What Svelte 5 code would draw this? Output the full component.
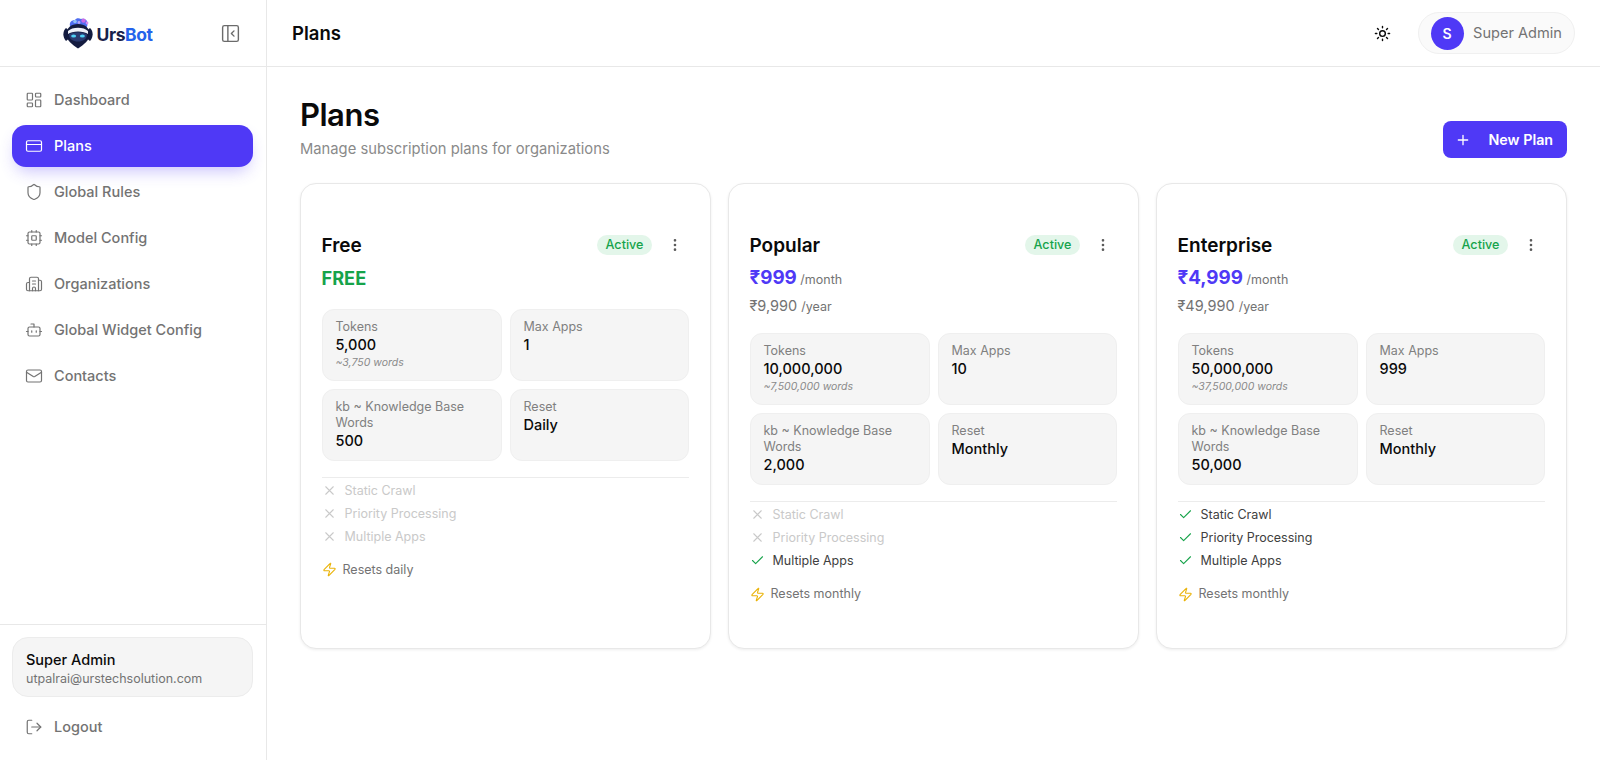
<script>
	const icons = {
		dashboard:
			'<rect width="7" height="9" x="3" y="3" rx="1"/><rect width="7" height="5" x="14" y="3" rx="1"/><rect width="7" height="9" x="14" y="12" rx="1"/><rect width="7" height="5" x="3" y="16" rx="1"/>',
		card: '<rect width="20" height="14" x="2" y="5" rx="2"/><line x1="2" x2="22" y1="10" y2="10"/>',
		shield:
			'<path d="M20 13c0 5-3.5 7.5-7.66 8.95a1 1 0 0 1-.67-.01C7.5 20.5 4 18 4 13V6a1 1 0 0 1 1-1c2 0 4.5-1.2 6.24-2.72a1.17 1.17 0 0 1 1.52 0C14.51 3.81 17 5 19 5a1 1 0 0 1 1 1z"/>',
		cpu: '<rect width="16" height="16" x="4" y="4" rx="2"/><rect width="6" height="6" x="9" y="9" rx="1"/><path d="M15 2v2M15 20v2M2 15h2M2 9h2M20 15h2M20 9h2M9 2v2M9 20v2"/>',
		building:
			'<path d="M10 12h4M10 8h4M14 21v-3a2 2 0 0 0-4 0v3"/><path d="M6 10H4a2 2 0 0 0-2 2v7a2 2 0 0 0 2 2h16a2 2 0 0 0 2-2V9a2 2 0 0 0-2-2h-2"/><path d="M6 21V5a2 2 0 0 1 2-2h8a2 2 0 0 1 2 2v16"/>',
		bot: '<path d="M12 8V4H8"/><rect width="16" height="12" x="4" y="8" rx="2"/><path d="M2 14h2M20 14h2M15 13v2M9 13v2"/>',
		mail: '<path d="m22 7-8.991 5.727a2 2 0 0 1-2.009 0L2 7"/><rect x="2" y="4" width="20" height="16" rx="2"/>',
		logout: '<path d="M9 21H5a2 2 0 0 1-2-2V5a2 2 0 0 1 2-2h4"/><path d="m16 17 5-5-5-5"/><path d="M21 12H9"/>',
		panel: '<rect width="18" height="18" x="3" y="3" rx="2"/><path d="M9 3v18"/><path d="m16 15-3-3 3-3"/>',
		sun: '<circle cx="12" cy="12" r="4"/><path d="M12 2v2M12 20v2M4.93 4.93l1.41 1.41M17.66 17.66l1.41 1.41M2 12h2M20 12h2M6.34 17.66l-1.41 1.41M19.07 4.93l-1.41 1.41"/>',
		plus: '<path d="M5 12h14M12 5v14"/>',
		dots: '<circle cx="12" cy="12" r="1"/><circle cx="12" cy="5" r="1"/><circle cx="12" cy="19" r="1"/>',
		x: '<path d="M18 6 6 18M6 6l12 12"/>',
		check: '<path d="M20 6 9 17l-5-5"/>',
		zap: '<path d="M4 14a1 1 0 0 1-.78-1.63l9.9-10.2a.5.5 0 0 1 .86.46l-1.92 6.02A1 1 0 0 0 13 10h7a1 1 0 0 1 .78 1.63l-9.9 10.2a.5.5 0 0 1-.86-.46l1.92-6.02A1 1 0 0 0 11 14z"/>'
	};

	const nav = [
		{ label: 'Dashboard', icon: 'dashboard' },
		{ label: 'Plans', icon: 'card', active: true },
		{ label: 'Global Rules', icon: 'shield' },
		{ label: 'Model Config', icon: 'cpu' },
		{ label: 'Organizations', icon: 'building' },
		{ label: 'Global Widget Config', icon: 'bot' },
		{ label: 'Contacts', icon: 'mail' }
	];

	const plans = [
		{
			name: 'Free',
			tokens: '5,000',
			words: '~3,750 words',
			apps: '1',
			kb: '500',
			reset: 'Daily',
			feats: [false, false, false],
			note: 'Resets daily'
		},
		{
			name: 'Popular',
			month: '₹999',
			year: '₹9,990',
			tokens: '10,000,000',
			words: '~7,500,000 words',
			apps: '10',
			kb: '2,000',
			reset: 'Monthly',
			feats: [false, false, true],
			note: 'Resets monthly'
		},
		{
			name: 'Enterprise',
			month: '₹4,999',
			year: '₹49,990',
			tokens: '50,000,000',
			words: '~37,500,000 words',
			apps: '999',
			kb: '50,000',
			reset: 'Monthly',
			feats: [true, true, true],
			note: 'Resets monthly'
		}
	];

	const featNames = ['Static Crawl', 'Priority Processing', 'Multiple Apps'];
</script>

{#snippet icon(name, size = 18, sw = 2)}
	<svg
		class="icon"
		width={size}
		height={size}
		viewBox="0 0 24 24"
		fill="none"
		stroke="currentColor"
		stroke-width={sw}
		stroke-linecap="round"
		stroke-linejoin="round"
	>
		{@html icons[name]}
	</svg>
{/snippet}

<div class="app">
	<aside>
		<div class="brand">
			<div class="logo">
				<svg width="30" height="32" viewBox="0 0 30 32">
					<!-- brain on top of the helmet -->
					<path d="M7 9 C6 5 9 3 12 3 C13 1 16 1 18 2 C21 1 25 3 24 6 C25 8 24 10 23 11 L8 11Z" fill="#4f6df0" />
					<circle cx="20.5" cy="3.6" r="2.2" fill="#c86be6" />
					<circle cx="24" cy="6" r="1.4" fill="#d88bf0" />
					<circle cx="12" cy="4.5" r="1.8" fill="#8fc0f7" />
					<circle cx="16" cy="5.5" r="1.4" fill="#b6a4f5" />
					<!-- ear caps -->
					<path d="M3 11 C-0.5 14 -0.5 20 3 24 L5.5 22 L5.5 13Z" fill="#141c40" />
					<path d="M27 11 C30.5 14 30.5 20 27 24 L24.5 22 L24.5 13Z" fill="#141c40" />
					<!-- helmet -->
					<path
						d="M15 7 C8 7 3.5 11 3.5 17 C3.5 23.5 9 27.5 15 31.5 C21 27.5 26.5 23.5 26.5 17 C26.5 11 22 7 15 7Z"
						fill="#141c40"
					/>
					<path d="M5 14 C9 9.5 21 9.5 25 14 L25 17 C21 13.5 9 13.5 5 17Z" fill="#eef1f9" />
					<path d="M6 17.5 C10 14.5 20 14.5 24 17.5 C24 22 20 24.5 15 24.5 C10 24.5 6 22 6 17.5Z" fill="#2a3a70" />
					<ellipse cx="10.6" cy="19" rx="2.5" ry="1.6" fill="#4fd0f5" />
					<ellipse cx="19.4" cy="19" rx="2.5" ry="1.6" fill="#4fd0f5" />
				</svg>
				<span class="wordmark">Urs<b>Bot</b></span>
			</div>
			<span class="collapse">{@render icon('panel', 21, 1.6)}</span>
		</div>

		<nav>
			{#each nav as item}
				<a class="nav-item" class:active={item.active} href="#top">
					{@render icon(item.icon, 18, 1.6)}
					<span>{item.label}</span>
				</a>
			{/each}
		</nav>

		<div class="side-foot">
			<div class="user-card">
				<div class="user-name">Super Admin</div>
				<div class="user-mail">utpalrai@urstechsolution.com</div>
			</div>
			<a class="nav-item logout" href="#top">
				{@render icon('logout', 18, 1.6)}
				<span>Logout</span>
			</a>
		</div>
	</aside>

	<div class="content">
		<header>
			<div class="top-title">Plans</div>
			<div class="top-right">
				<span class="sun">{@render icon('sun', 17, 2)}</span>
				<div class="user-pill">
					<span class="avatar">S</span>
					<span class="pill-name">Super Admin</span>
				</div>
			</div>
		</header>

		<main>
			<div class="page-head">
				<div>
					<h1>Plans</h1>
					<p>Manage subscription plans for organizations</p>
				</div>
				<button class="new-plan">
					{@render icon('plus', 16, 2)}
					<span>New Plan</span>
				</button>
			</div>

			<div class="cards">
				{#each plans as plan}
					<section class="card">
						<div class="card-top">
							<h2>{plan.name}</h2>
							<span class="badge">Active</span>
							<span class="dots">{@render icon('dots', 16, 2)}</span>
						</div>

						{#if plan.month}
							<div class="price"><strong>{plan.month}</strong> <span>/month</span></div>
							<div class="price-year">{plan.year} <span>/year</span></div>
						{:else}
							<div class="price free"><strong>FREE</strong></div>
						{/if}

						<div class="stats">
							<div class="stat">
								<div class="stat-label">Tokens</div>
								<div class="stat-value">{plan.tokens}</div>
								<div class="stat-words">{plan.words}</div>
							</div>
							<div class="stat">
								<div class="stat-label">Max Apps</div>
								<div class="stat-value">{plan.apps}</div>
							</div>
							<div class="stat">
								<div class="stat-label">kb ~ Knowledge Base Words</div>
								<div class="stat-value">{plan.kb}</div>
							</div>
							<div class="stat">
								<div class="stat-label">Reset</div>
								<div class="stat-value">{plan.reset}</div>
							</div>
						</div>

						<ul class="feats">
							{#each featNames as feat, i}
								<li class:on={plan.feats[i]}>
									{@render icon(plan.feats[i] ? 'check' : 'x', 15, 1.7)}
									<span>{feat}</span>
								</li>
							{/each}
						</ul>

						<div class="note">
							<span class="zap">{@render icon('zap', 15, 1.8)}</span>
							<span>{plan.note}</span>
						</div>
					</section>
				{/each}
			</div>
		</main>
	</div>
</div>

<style>
	:global(body) {
		margin: 0;
		background: #fff;
		font-family: Inter, 'Liberation Sans', sans-serif;
		color: #0a0a0a;
	}

	.icon {
		display: block;
		flex-shrink: 0;
	}

	.app {
		display: grid;
		grid-template-columns: 267px 1fr;
		height: 760px;
		overflow: hidden;
	}

	aside {
		display: flex;
		flex-direction: column;
		border-right: 1px solid #e8e8e8;
		min-width: 0;
	}

	.brand {
		height: 67px;
		box-sizing: border-box;
		border-bottom: 1px solid #e8e8e8;
		display: flex;
		align-items: center;
		justify-content: space-between;
		padding: 0 25px 0 63px;
		flex-shrink: 0;
	}

	.logo {
		display: flex;
		align-items: center;
		gap: 3.5px;
	}

	.logo svg {
		display: block;
	}

	.wordmark {
		font-size: 17.5px;
		font-weight: 700;
		letter-spacing: -0.4px;
		color: #17204a;
		margin-top: 2.5px;
	}

	.wordmark b {
		color: #2563eb;
		font-weight: 700;
	}

	.collapse {
		color: #6b6b6b;
	}

	nav {
		flex: 1;
		display: flex;
		flex-direction: column;
		gap: 4.5px;
		padding: 12px 13px 0 12px;
	}

	.nav-item {
		display: flex;
		align-items: center;
		gap: 11px;
		height: 41.5px;
		padding: 0 13px;
		border-radius: 14px;
		color: #737373;
		font-size: 14.5px;
		font-weight: 500;
		text-decoration: none;
	}

	.nav-item.active {
		background: #4f39f6;
		color: #fff;
		box-shadow: 0 8px 16px -4px rgba(79, 57, 246, 0.3);
	}

	.side-foot {
		border-top: 1px solid #e8e8e8;
		padding: 12px 13px 0 12px;
		height: 136px;
		box-sizing: border-box;
		flex-shrink: 0;
	}

	.user-card {
		background: #f5f5f5;
		border: 1px solid #ececec;
		border-radius: 16px;
		padding: 12px 13px;
		height: 60px;
		box-sizing: border-box;
	}

	.user-name {
		font-size: 14.5px;
		font-weight: 500;
		line-height: 20px;
		color: #0a0a0a;
	}

	.user-mail {
		font-size: 12.5px;
		line-height: 17px;
		color: #737373;
	}

	.logout {
		margin-top: 9px;
	}

	.content {
		min-width: 0;
		display: flex;
		flex-direction: column;
	}

	header {
		height: 67px;
		box-sizing: border-box;
		border-bottom: 1px solid #e8e8e8;
		display: flex;
		align-items: center;
		justify-content: space-between;
		padding: 0 25px;
		flex-shrink: 0;
	}

	.top-title {
		font-size: 18.5px;
		font-weight: 600;
	}

	.top-right {
		display: flex;
		align-items: center;
		gap: 26.5px;
	}

	.user-pill {
		display: flex;
		align-items: center;
		gap: 9.5px;
		height: 42px;
		box-sizing: border-box;
		padding: 0 12px;
		background: #fafafa;
		border: 1px solid #f0f0f0;
		border-radius: 21px;
	}

	.avatar {
		width: 33px;
		height: 33px;
		border-radius: 50%;
		background: #4f39f6;
		color: #fff;
		font-size: 14px;
		font-weight: 600;
		display: flex;
		align-items: center;
		justify-content: center;
	}

	.pill-name {
		font-size: 14.6px;
		color: #737373;
	}

	main {
		padding: 28px 33px 0 33px;
	}

	.page-head {
		display: flex;
		align-items: flex-end;
		justify-content: space-between;
		height: 88px;
	}

	.page-head > div {
		align-self: flex-start;
	}

	h1 {
		margin: 0;
		font-size: 31px;
		line-height: 40px;
		font-weight: 600;
		letter-spacing: -0.5px;
	}

	.page-head p {
		margin: 4px 0 0;
		font-size: 14.75px;
		line-height: 20px;
		color: #8a8a8a;
	}

	.new-plan {
		display: flex;
		align-items: center;
		gap: 17.5px;
		height: 37px;
		width: 124px;
		box-sizing: border-box;
		padding: 0 12px;
		margin-bottom: 25px;
		border: none;
		border-radius: 8px;
		background: #4f39f6;
		color: #fff;
		font: 600 14.3px Inter, 'Liberation Sans', sans-serif;
		white-space: nowrap;
	}

	.cards {
		display: grid;
		grid-template-columns: repeat(3, 1fr);
		gap: 17px;
		align-items: stretch;
	}

	.card {
		height: 466px;
		box-sizing: border-box;
		border: 1px solid #e8e8e8;
		border-radius: 16px;
		padding: 46px 21px 0 20.5px;
		box-shadow: 0 1px 3px rgba(0, 0, 0, 0.07);
		background: #fff;
	}

	.card-top {
		display: flex;
		align-items: center;
		height: 30px;
	}

	h2 {
		margin: 0;
		flex: 1;
		font-size: 19px;
		font-weight: 600;
	}

	.badge {
		background: #e3f6ea;
		color: #16a34a;
		font-size: 12.6px;
		font-weight: 500;
		line-height: 20px;
		padding: 0 8.5px;
		border-radius: 10px;
	}

	.dots {
		margin-left: 15px;
		margin-right: 6px;
		color: #5a5a5a;
	}

	.price {
		margin-top: 3.5px;
		line-height: 28px;
		color: #737373;
		font-size: 12.5px;
	}

	.price strong {
		font-size: 18.8px;
		font-weight: 700;
		color: #4f39f6;
	}

	.price.free strong {
		font-size: 18.2px;
		color: #16a34a;
	}

	.price-year {
		font-size: 14.5px;
		line-height: 24px;
		color: #737373;
	}

	.price-year span {
		font-size: 12.5px;
	}

	.stats {
		display: grid;
		grid-template-columns: 180px 1fr;
		grid-auto-rows: 72px;
		gap: 8px;
		margin-top: 14px;
	}

	.price-year + .stats {
		margin-top: 14.5px;
	}

	.stat {
		background: #f5f5f5;
		border: 1px solid #efefef;
		border-radius: 12px;
		padding: 9px 13px;
		box-sizing: border-box;
	}

	.stat-label {
		font-size: 12.5px;
		line-height: 16px;
		color: #808080;
	}

	.stat-value {
		font-size: 14.5px;
		font-weight: 500;
		line-height: 20px;
	}

	.stat-words {
		margin-top: 1px;
		font-size: 10.5px;
		font-style: italic;
		line-height: 14px;
		color: #8a8a8a;
	}

	.feats {
		list-style: none;
		margin: 16px 0 0;
		padding: 1px 0 0;
		border-top: 1px solid #ececec;
	}

	.feats li {
		display: flex;
		align-items: center;
		gap: 8px;
		height: 23px;
		font-size: 12.5px;
		color: #c9c9c9;
	}

	.feats li.on {
		color: #404040;
	}

	.feats li.on .icon {
		color: #16a34a;
	}

	.note {
		display: flex;
		align-items: center;
		gap: 6px;
		margin-top: 12px;
		font-size: 12.5px;
		line-height: 20px;
		color: #737373;
	}

	.zap {
		color: #eab308;
	}
</style>
